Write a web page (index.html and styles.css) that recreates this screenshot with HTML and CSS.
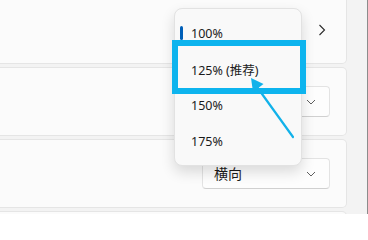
FILE: index.html
```html
<!DOCTYPE html>
<html lang="zh-CN">
<head>
<meta charset="utf-8">
<title>缩放</title>
<link rel="stylesheet" href="styles.css">
</head>
<body>
<div class="window">
  <div class="list">
    <div class="card c1">
      <svg class="chev-right" width="8" height="12" viewBox="0 0 8 12"><path d="M1.5 1 L6.5 6 L1.5 11" fill="none" stroke="#2b2b2b" stroke-width="1.1"/></svg>
    </div>
    <div class="card c2">
      <div class="combo">
        <span class="combo-text"></span>
        <svg class="chev-down" width="10" height="6" viewBox="0 0 10 6"><path d="M1 1 L5 5 L9 1" fill="none" stroke="#606060" stroke-width="1"/></svg>
      </div>
    </div>
    <div class="card c3">
      <div class="combo">
        <span class="combo-text">横向</span>
        <svg class="chev-down" width="10" height="6" viewBox="0 0 10 6"><path d="M1 1 L5 5 L9 1" fill="none" stroke="#606060" stroke-width="1"/></svg>
      </div>
    </div>
    <div class="card c4"></div>
  </div>

  <div class="popup">
    <div class="item selected"><span class="indicator"></span>100%</div>
    <div class="item">125% (推荐)</div>
    <div class="item">150%</div>
    <div class="item">175%</div>
  </div>

  <div class="highlight"></div>
  <svg class="arrow" width="368" height="214" viewBox="0 0 368 214">
    <line x1="293" y1="137" x2="257" y2="87" stroke="#12b2ea" stroke-width="2.2" stroke-linecap="round"/>
    <polygon points="251,78 263.5,84 253,92" fill="#12b2ea"/>
  </svg>
</div>
</body>
</html>
```

FILE: styles.css
```css
html, body {
  margin: 0;
  padding: 0;
}
body {
  width: 368px;
  height: 214px;
  overflow: hidden;
  font-family: "Noto Sans", Roboto, "Noto Sans CJK SC", sans-serif;
  color: #1b1b1b;
}
.window {
  position: relative;
  width: 367px;
  height: 214px;
  background: #f3f3f3;
  border-right: 1px solid #8c8c8c;
  overflow: hidden;
}
.list {
  display: flex;
  flex-direction: column;
  gap: 3px;
  margin-top: -5px;
  margin-right: 20px;
}
.card {
  height: 67px;
  background: #fbfbfb;
  border: 1px solid #e5e5e5;
  border-left: none;
  border-radius: 0 5px 5px 0;
  display: flex;
  align-items: center;
  justify-content: flex-end;
  padding-right: 16px;
}
.c1 {
  padding-right: 20px;
}
.chev-right {
  display: block;
}
.combo {
  box-sizing: border-box;
  width: 128px;
  height: 31px;
  background: #fdfdfd;
  border: 1px solid #e3e3e3;
  border-bottom-color: #d0d0d0;
  border-radius: 4px;
  display: flex;
  align-items: center;
  justify-content: space-between;
  padding: 0 13px 0 11px;
}
.combo-text {
  font-size: 14px;
  line-height: 1;
}
.chev-down {
  display: block;
}
.popup {
  position: absolute;
  left: 174px;
  top: 8px;
  width: 128px;
  box-sizing: border-box;
  padding: 6px 0;
  background: #f9f9f9;
  border: 1px solid #e2e2e2;
  border-radius: 8px;
  box-shadow: 0 6px 14px rgba(0, 0, 0, 0.14);
  display: flex;
  flex-direction: column;
}
.item {
  position: relative;
  height: 36px;
  display: flex;
  align-items: center;
  padding-left: 16px;
  font-size: 12.5px;
  margin: 0 4px 0 0;
}
.indicator {
  position: absolute;
  left: 5px;
  top: 11px;
  width: 3px;
  height: 14px;
  border-radius: 2px;
  background: #005fb8;
}
.highlight {
  position: absolute;
  left: 172px;
  top: 40px;
  width: 122px;
  height: 42px;
  border: 6px solid #0db4ee;
}
.arrow {
  position: absolute;
  left: 0;
  top: 0;
}
```
